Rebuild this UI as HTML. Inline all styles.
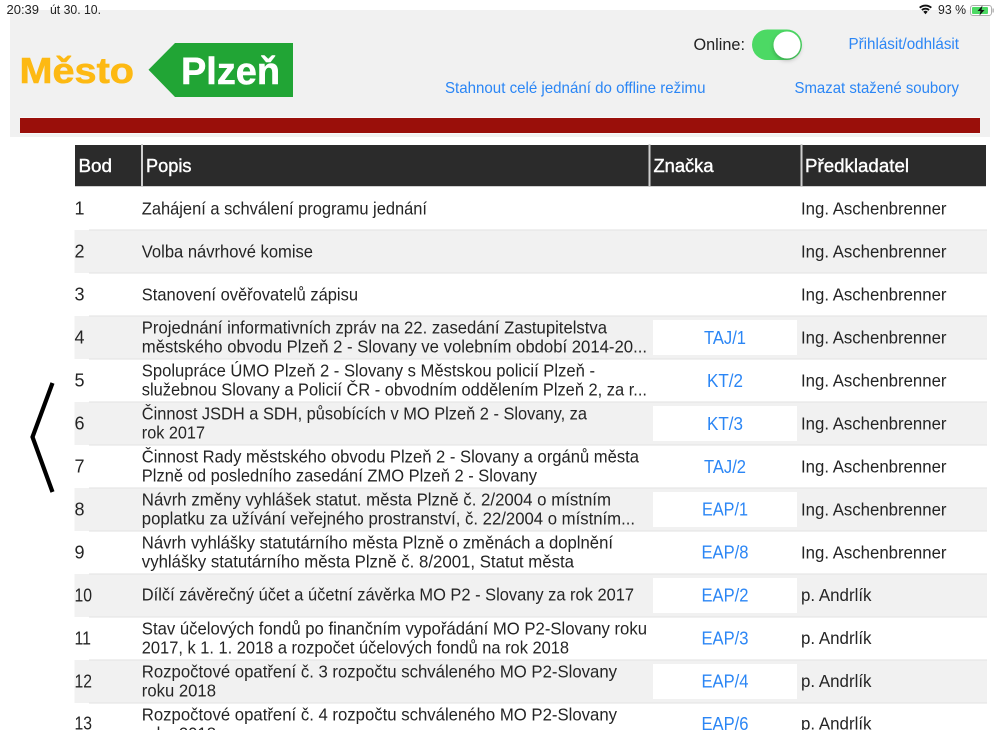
<!DOCTYPE html>
<html lang="cs">
<head>
<meta charset="utf-8">
<title>Město Plzeň</title>
<style>
html,body{margin:0;padding:0;background:#fff;width:1000px;height:750px;overflow:hidden}
svg{display:block}
text{font-family:"Liberation Sans",sans-serif}
.t{font-size:17.4px;fill:#242424}
.n{font-size:18px;fill:#242424}
.h{font-size:18.5px;fill:#fff;stroke:#fff;stroke-width:.4px}
.l{font-size:16px;fill:#2b86f5}
.b{font-size:18px;fill:#2b86f5;text-anchor:middle}
.s{font-size:12.5px;fill:#222}
</style>
</head>
<body>
<svg width="1000" height="750" viewBox="0 0 1000 750" xmlns="http://www.w3.org/2000/svg">
<defs>
<clipPath id="c"><rect x="0" y="0" width="1000" height="730"/></clipPath>
<filter id="sh" x="-50%" y="-50%" width="200%" height="200%"><feDropShadow dx="0" dy="2" stdDeviation="2" flood-color="#000" flood-opacity=".25"/></filter>
</defs>

<!-- header panel -->
<rect x="10" y="10" width="980" height="127" fill="#f1f1f1"/>
<rect x="20" y="117.500" width="960" height="16" fill="#fff"/>
<rect x="20" y="118" width="960" height="15" fill="#9a0f0a"/>

<!-- status bar -->
<text class="s" x="6.500" y="14" textLength="32.500" lengthAdjust="spacingAndGlyphs">20:39</text>
<text class="s" x="50" y="14" textLength="51" lengthAdjust="spacingAndGlyphs">út 30. 10.</text>
<g fill="none" stroke="#111">
<path d="M919.700 7.700A8.800 8.800 0 0 1 931.300 7.700" stroke-width="1.900"/>
<path d="M921.900 10A5.600 5.600 0 0 1 929.100 10" stroke-width="1.900"/>
</g>
<path d="M923.300 11.700A3 3 0 0 1 927.700 11.700L925.500 14.200Z" fill="#111"/>
<text class="s" x="938" y="14" textLength="28" lengthAdjust="spacingAndGlyphs">93 %</text>
<rect x="970.500" y="5.500" width="21" height="10" rx="2.500" fill="#fff" stroke="#adadad"/>
<rect x="972" y="7" width="16" height="7" rx="1" fill="#4cd964"/>
<rect x="992.500" y="8.500" width="1.300" height="4" fill="#adadad"/>
<path d="M982.500 5.500L977.500 11H980.500L979.500 15.500L984.500 10H981.500Z" fill="#111"/>

<!-- logo -->
<text x="19.500" y="83" font-size="36" font-weight="700" fill="#fdb913" stroke="#fdb913" stroke-width=".6" textLength="114.500" lengthAdjust="spacingAndGlyphs">Město</text>
<polygon points="148.500,69.800 175,43 293,43 293,97 175,97" fill="#21a535"/>
<text x="181" y="84" font-size="38" font-weight="700" fill="#fff" stroke="#fff" stroke-width=".5" textLength="99" lengthAdjust="spacingAndGlyphs">Plzeň</text>

<!-- online toggle -->
<text x="693.500" y="50" font-size="17" fill="#222" textLength="51.500" lengthAdjust="spacingAndGlyphs">Online:</text>
<rect x="752" y="29.500" width="50" height="30.500" rx="15.250" fill="#4cd964"/>
<circle cx="787" cy="45" r="13.500" fill="#fff" filter="url(#sh)"/>

<!-- links -->
<text class="l" x="848.500" y="49" textLength="110.500" lengthAdjust="spacingAndGlyphs">Přihlásit/odhlásit</text>
<text class="l" x="445" y="93" textLength="260.500" lengthAdjust="spacingAndGlyphs">Stahnout celé jednání do offline režimu</text>
<text class="l" x="794.500" y="93" textLength="164.500" lengthAdjust="spacingAndGlyphs">Smazat stažené soubory</text>

<!-- back chevron -->
<polyline points="52.500,383 32.500,437 52.500,492" fill="none" stroke="#000" stroke-width="4.200" stroke-linejoin="miter"/>

<!-- table head -->
<rect x="75" y="145" width="911" height="41.500" fill="#2b2b2b"/>
<rect x="75" y="186" width="911" height="1" fill="#cfcfcf"/>
<rect x="141" y="144" width="2" height="43" fill="#cfcfcf"/>
<rect x="648.500" y="144" width="2" height="43" fill="#cfcfcf"/>
<rect x="800.500" y="144" width="2" height="43" fill="#cfcfcf"/>
<text class="h" x="78.500" y="172" textLength="33.500" lengthAdjust="spacingAndGlyphs">Bod</text>
<text class="h" x="146" y="172" textLength="45.500" lengthAdjust="spacingAndGlyphs">Popis</text>
<text class="h" x="653.500" y="172" textLength="60" lengthAdjust="spacingAndGlyphs">Značka</text>
<text class="h" x="805" y="172" textLength="104" lengthAdjust="spacingAndGlyphs">Předkladatel</text>

<g clip-path="url(#c)">
<!-- grey rows -->
<g fill="#f1f1f1">
<rect x="74.500" y="230" width="912.500" height="43"/>
<rect x="74.500" y="316" width="912.500" height="43"/>
<rect x="74.500" y="402" width="912.500" height="43"/>
<rect x="74.500" y="488" width="912.500" height="43"/>
<rect x="74.500" y="574" width="912.500" height="43"/>
<rect x="74.500" y="660" width="912.500" height="43"/>
</g>
<!-- separators -->
<g fill="#e2e2e2">
<rect x="89" y="229.500" width="898" height="1"/>
<rect x="89" y="272.500" width="898" height="1"/>
<rect x="89" y="315.500" width="898" height="1"/>
<rect x="89" y="358.500" width="898" height="1"/>
<rect x="89" y="401.500" width="898" height="1"/>
<rect x="89" y="444.500" width="898" height="1"/>
<rect x="89" y="487.500" width="898" height="1"/>
<rect x="89" y="530.500" width="898" height="1"/>
<rect x="89" y="573.500" width="898" height="1"/>
<rect x="89" y="616.500" width="898" height="1"/>
<rect x="89" y="659.500" width="898" height="1"/>
<rect x="89" y="702.500" width="898" height="1"/>
</g>
<!-- badges on grey rows -->
<g fill="#fff">
<rect x="653" y="320" width="144" height="35"/>
<rect x="653" y="406" width="144" height="35"/>
<rect x="653" y="492" width="144" height="35"/>
<rect x="653" y="578" width="144" height="35"/>
<rect x="653" y="664" width="144" height="35"/>
</g>

<!-- numbers -->
<text class="n" x="74.500" y="214.500">1</text>
<text class="n" x="74.500" y="257.500">2</text>
<text class="n" x="74.500" y="300.500">3</text>
<text class="n" x="74.500" y="343.500">4</text>
<text class="n" x="74.500" y="386.500">5</text>
<text class="n" x="74.500" y="429.500">6</text>
<text class="n" x="74.500" y="472.500">7</text>
<text class="n" x="74.500" y="515.500">8</text>
<text class="n" x="74.500" y="558.500">9</text>
<text class="n" x="74.500" y="601.500" textLength="17.500" lengthAdjust="spacingAndGlyphs">10</text>
<text class="n" x="74.500" y="644.500" textLength="16.500" lengthAdjust="spacingAndGlyphs">11</text>
<text class="n" x="74.500" y="687.500" textLength="17.500" lengthAdjust="spacingAndGlyphs">12</text>
<text class="n" x="74.500" y="729.500" textLength="17.500" lengthAdjust="spacingAndGlyphs">13</text>

<!-- descriptions -->
<text class="t" x="141.800" y="214.500" textLength="285.200" lengthAdjust="spacingAndGlyphs">Zahájení a schválení programu jednání</text>
<text class="t" x="141.800" y="257.500" textLength="171.200" lengthAdjust="spacingAndGlyphs">Volba návrhové komise</text>
<text class="t" x="141.800" y="300.500" textLength="216.200" lengthAdjust="spacingAndGlyphs">Stanovení ověřovatelů zápisu</text>
<text class="t" x="141.800" y="333.500" textLength="465.200" lengthAdjust="spacingAndGlyphs">Projednání informativních zpráv na 22. zasedání Zastupitelstva</text>
<text class="t" x="141.800" y="352.500" textLength="505.200" lengthAdjust="spacingAndGlyphs">městského obvodu Plzeň 2 - Slovany ve volebním období 2014-20...</text>
<text class="t" x="141.800" y="376.500" textLength="453.200" lengthAdjust="spacingAndGlyphs">Spolupráce ÚMO Plzeň 2 - Slovany s Městskou policií Plzeň -</text>
<text class="t" x="141.800" y="395.500" textLength="505.200" lengthAdjust="spacingAndGlyphs">služebnou Slovany a Policií ČR - obvodním oddělením Plzeň 2, za r...</text>
<text class="t" x="141.800" y="419.500" textLength="445.200" lengthAdjust="spacingAndGlyphs">Činnost JSDH a SDH, působících v MO Plzeň 2 - Slovany, za</text>
<text class="t" x="141.800" y="438.500" textLength="63.200" lengthAdjust="spacingAndGlyphs">rok 2017</text>
<text class="t" x="141.800" y="462.500" textLength="497.200" lengthAdjust="spacingAndGlyphs">Činnost Rady městského obvodu Plzeň 2 - Slovany a orgánů města</text>
<text class="t" x="141.800" y="481.500" textLength="395.200" lengthAdjust="spacingAndGlyphs">Plzně od posledního zasedání ZMO Plzeň 2 - Slovany</text>
<text class="t" x="141.800" y="505.500" textLength="469.200" lengthAdjust="spacingAndGlyphs">Návrh změny vyhlášek statut. města Plzně č. 2/2004 o místním</text>
<text class="t" x="141.800" y="524.500" textLength="493.200" lengthAdjust="spacingAndGlyphs">poplatku za užívání veřejného prostranství, č. 22/2004 o místním...</text>
<text class="t" x="141.800" y="548.500" textLength="471.200" lengthAdjust="spacingAndGlyphs">Návrh vyhlášky statutárního města Plzně o změnách a doplnění</text>
<text class="t" x="141.800" y="567.500" textLength="432.200" lengthAdjust="spacingAndGlyphs">vyhlášky statutárního města Plzně č. 8/2001, Statut města</text>
<text class="t" x="141.800" y="600.500" textLength="492.200" lengthAdjust="spacingAndGlyphs">Dílčí závěrečný účet a účetní závěrka MO P2 - Slovany za rok 2017</text>
<text class="t" x="141.800" y="634.500" textLength="505.200" lengthAdjust="spacingAndGlyphs">Stav účelových fondů po finančním vypořádání MO P2-Slovany roku</text>
<text class="t" x="141.800" y="653.500" textLength="427.200" lengthAdjust="spacingAndGlyphs">2017, k 1. 1. 2018 a rozpočet účelových fondů na rok 2018</text>
<text class="t" x="141.800" y="677.500" textLength="475.200" lengthAdjust="spacingAndGlyphs">Rozpočtové opatření č. 3 rozpočtu schváleného MO P2-Slovany</text>
<text class="t" x="141.800" y="696.500" textLength="74.200" lengthAdjust="spacingAndGlyphs">roku 2018</text>
<text class="t" x="141.800" y="720.500" textLength="475.200" lengthAdjust="spacingAndGlyphs">Rozpočtové opatření č. 4 rozpočtu schváleného MO P2-Slovany</text>
<text class="t" x="141.800" y="739.500" textLength="74.200" lengthAdjust="spacingAndGlyphs">roku 2018</text>

<!-- badges text -->
<text class="b" x="725" y="344" textLength="42" lengthAdjust="spacingAndGlyphs">TAJ/1</text>
<text class="b" x="725" y="387" textLength="36" lengthAdjust="spacingAndGlyphs">KT/2</text>
<text class="b" x="725" y="430" textLength="36" lengthAdjust="spacingAndGlyphs">KT/3</text>
<text class="b" x="725" y="473" textLength="42" lengthAdjust="spacingAndGlyphs">TAJ/2</text>
<text class="b" x="725" y="515.500" textLength="46" lengthAdjust="spacingAndGlyphs">EAP/1</text>
<text class="b" x="725" y="558.500" textLength="47" lengthAdjust="spacingAndGlyphs">EAP/8</text>
<text class="b" x="725" y="601.500" textLength="47" lengthAdjust="spacingAndGlyphs">EAP/2</text>
<text class="b" x="725" y="644.500" textLength="47" lengthAdjust="spacingAndGlyphs">EAP/3</text>
<text class="b" x="725" y="687.500" textLength="47" lengthAdjust="spacingAndGlyphs">EAP/4</text>
<text class="b" x="725" y="730" textLength="47" lengthAdjust="spacingAndGlyphs">EAP/6</text>

<!-- submitters -->
<text class="t" x="801" y="214.500" textLength="145.500" lengthAdjust="spacingAndGlyphs">Ing. Aschenbrenner</text>
<text class="t" x="801" y="257.500" textLength="145.500" lengthAdjust="spacingAndGlyphs">Ing. Aschenbrenner</text>
<text class="t" x="801" y="300.500" textLength="145.500" lengthAdjust="spacingAndGlyphs">Ing. Aschenbrenner</text>
<text class="t" x="801" y="343.500" textLength="145.500" lengthAdjust="spacingAndGlyphs">Ing. Aschenbrenner</text>
<text class="t" x="801" y="386.500" textLength="145.500" lengthAdjust="spacingAndGlyphs">Ing. Aschenbrenner</text>
<text class="t" x="801" y="429.500" textLength="145.500" lengthAdjust="spacingAndGlyphs">Ing. Aschenbrenner</text>
<text class="t" x="801" y="472.500" textLength="145.500" lengthAdjust="spacingAndGlyphs">Ing. Aschenbrenner</text>
<text class="t" x="801" y="515.500" textLength="145.500" lengthAdjust="spacingAndGlyphs">Ing. Aschenbrenner</text>
<text class="t" x="801" y="558.500" textLength="145.500" lengthAdjust="spacingAndGlyphs">Ing. Aschenbrenner</text>
<text class="t" x="801" y="601" textLength="70.500" lengthAdjust="spacingAndGlyphs">p. Andrlík</text>
<text class="t" x="801" y="644" textLength="70.500" lengthAdjust="spacingAndGlyphs">p. Andrlík</text>
<text class="t" x="801" y="687" textLength="70.500" lengthAdjust="spacingAndGlyphs">p. Andrlík</text>
<text class="t" x="801" y="729.500" textLength="70.500" lengthAdjust="spacingAndGlyphs">p. Andrlík</text>
</g>
</svg>
</body>
</html>
